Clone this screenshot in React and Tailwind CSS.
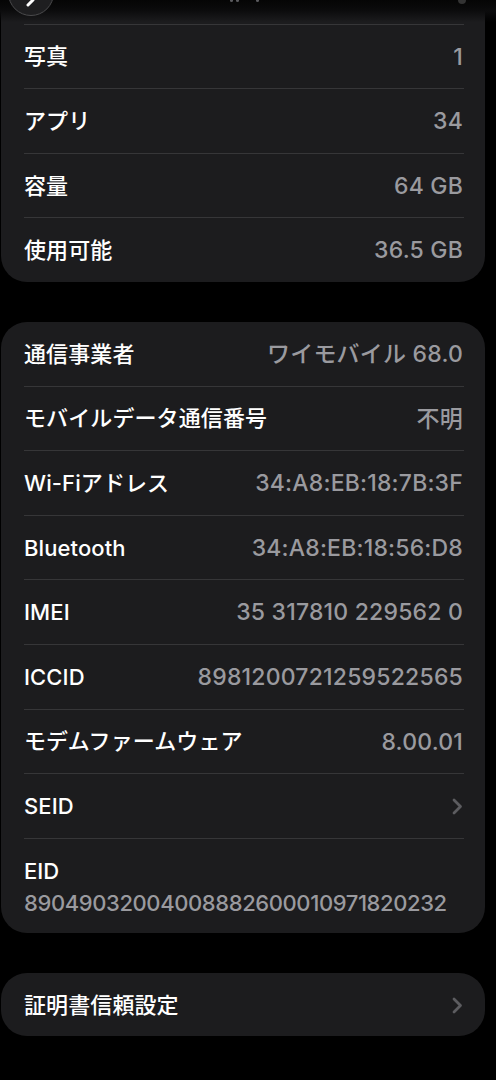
import React from "react";

const font = { fontFamily: 'Inter, "Noto Sans CJK JP", sans-serif' };

const Chevron = () => (
  <svg width="11" height="17" viewBox="0 0 11 17" fill="none">
    <path d="M2 2l6.5 6.5L2 15" stroke="#5c5c60" strokeWidth="2.8" strokeLinecap="round" strokeLinejoin="round" />
  </svg>
);

const Divider = () => <div className="ml-[23px] mr-[21px] h-px bg-[#363638]" />;

const Row = ({ label, value, chevron }) => (
  <div className="h-[63.6px] flex items-center justify-between pl-[23px] pr-[22px] pt-[1px]">
    <span className="text-white text-[22px] font-medium tracking-[0.1px]">{label}</span>
    {chevron ? (
      <Chevron />
    ) : (
      <span className="text-[#9a9a9f] text-[23px] font-medium tracking-[0.2px]">{value}</span>
    )}
  </div>
);

const Group = ({ rows, children, className = "" }) => (
  <div className={`bg-[#1c1c1e] rounded-[26px] ${className}`}>
    {rows.map((r, i) => (
      <React.Fragment key={r.label}>
        {i > 0 && <Divider />}
        <Row {...r} />
      </React.Fragment>
    ))}
    {children}
  </div>
);

const storage = [
  { label: "写真", value: "1" },
  { label: "アプリ", value: "34" },
  { label: "容量", value: "64 GB" },
  { label: "使用可能", value: "36.5 GB" },
];

const network = [
  { label: "通信事業者", value: "ワイモバイル 68.0" },
  { label: "モバイルデータ通信番号", value: "不明" },
  { label: "Wi-Fiアドレス", value: "34:A8:EB:18:7B:3F" },
  { label: "Bluetooth", value: "34:A8:EB:18:56:D8" },
  { label: "IMEI", value: "35 317810 229562 0" },
  { label: "ICCID", value: "8981200721259522565" },
  { label: "モデムファームウェア", value: "8.00.01" },
  { label: "SEID", chevron: true },
];

export default function App() {
  return (
    <div className="w-[496px] h-[1080px] bg-black overflow-hidden relative" style={font}>
      <div className="pl-[1px] pr-[11px] -mt-[40px]">
        <div className="bg-[#1c1c1e] rounded-[26px]">
          <div className="h-[63.6px]" />
          <Divider />
          {storage.map((r, i) => (
            <React.Fragment key={r.label}>
              {i > 0 && <Divider />}
              <Row {...r} />
            </React.Fragment>
          ))}
        </div>

        <Group rows={network} className="mt-[40px]">
          <Divider />
          <div className="pl-[23px] pr-[22px] pt-[18px] pb-[12px] flex flex-col">
            <span className="text-white text-[22px] font-medium leading-[28px]">EID</span>
            <span className="text-[#9a9a9f] text-[22px] font-medium leading-[36px] tracking-[-0.4px]">
              89049032004008882600010971820232
            </span>
          </div>
        </Group>

        <Group rows={[{ label: "証明書信頼設定", chevron: true }]} className="mt-[40px]" />
      </div>

      {/* header blur, scrolled away */}
      <div className="absolute top-0 left-0 right-0 h-[22px] bg-gradient-to-b from-[#050505] via-[#0c0c0d] to-transparent" />
      <div className="absolute left-[8px] -top-[30px] w-[46px] h-[46px] rounded-full bg-[#1e1e20] border border-[#4a4a4c] flex items-end justify-center pb-[4px]">
        <svg width="12" height="12" viewBox="0 0 12 12" fill="none">
          <path d="M8 1L3 6" stroke="#ffffff" strokeWidth="3" strokeLinecap="round" />
        </svg>
      </div>
      <div className="absolute left-[230px] -top-[1px] flex gap-[3px]">
        <span className="w-[3px] h-[3px] rounded-full bg-[#5a5a5e]" />
        <span className="w-[3px] h-[3px] rounded-full bg-[#5a5a5e]" />
        <span className="w-[3px] h-[3px] rounded-full bg-[#5a5a5e] ml-[14px]" />
      </div>
      <div className="absolute right-[30px] -top-[4px] w-[8px] h-[8px] rounded-full bg-[#333]" />
    </div>
  );
}
